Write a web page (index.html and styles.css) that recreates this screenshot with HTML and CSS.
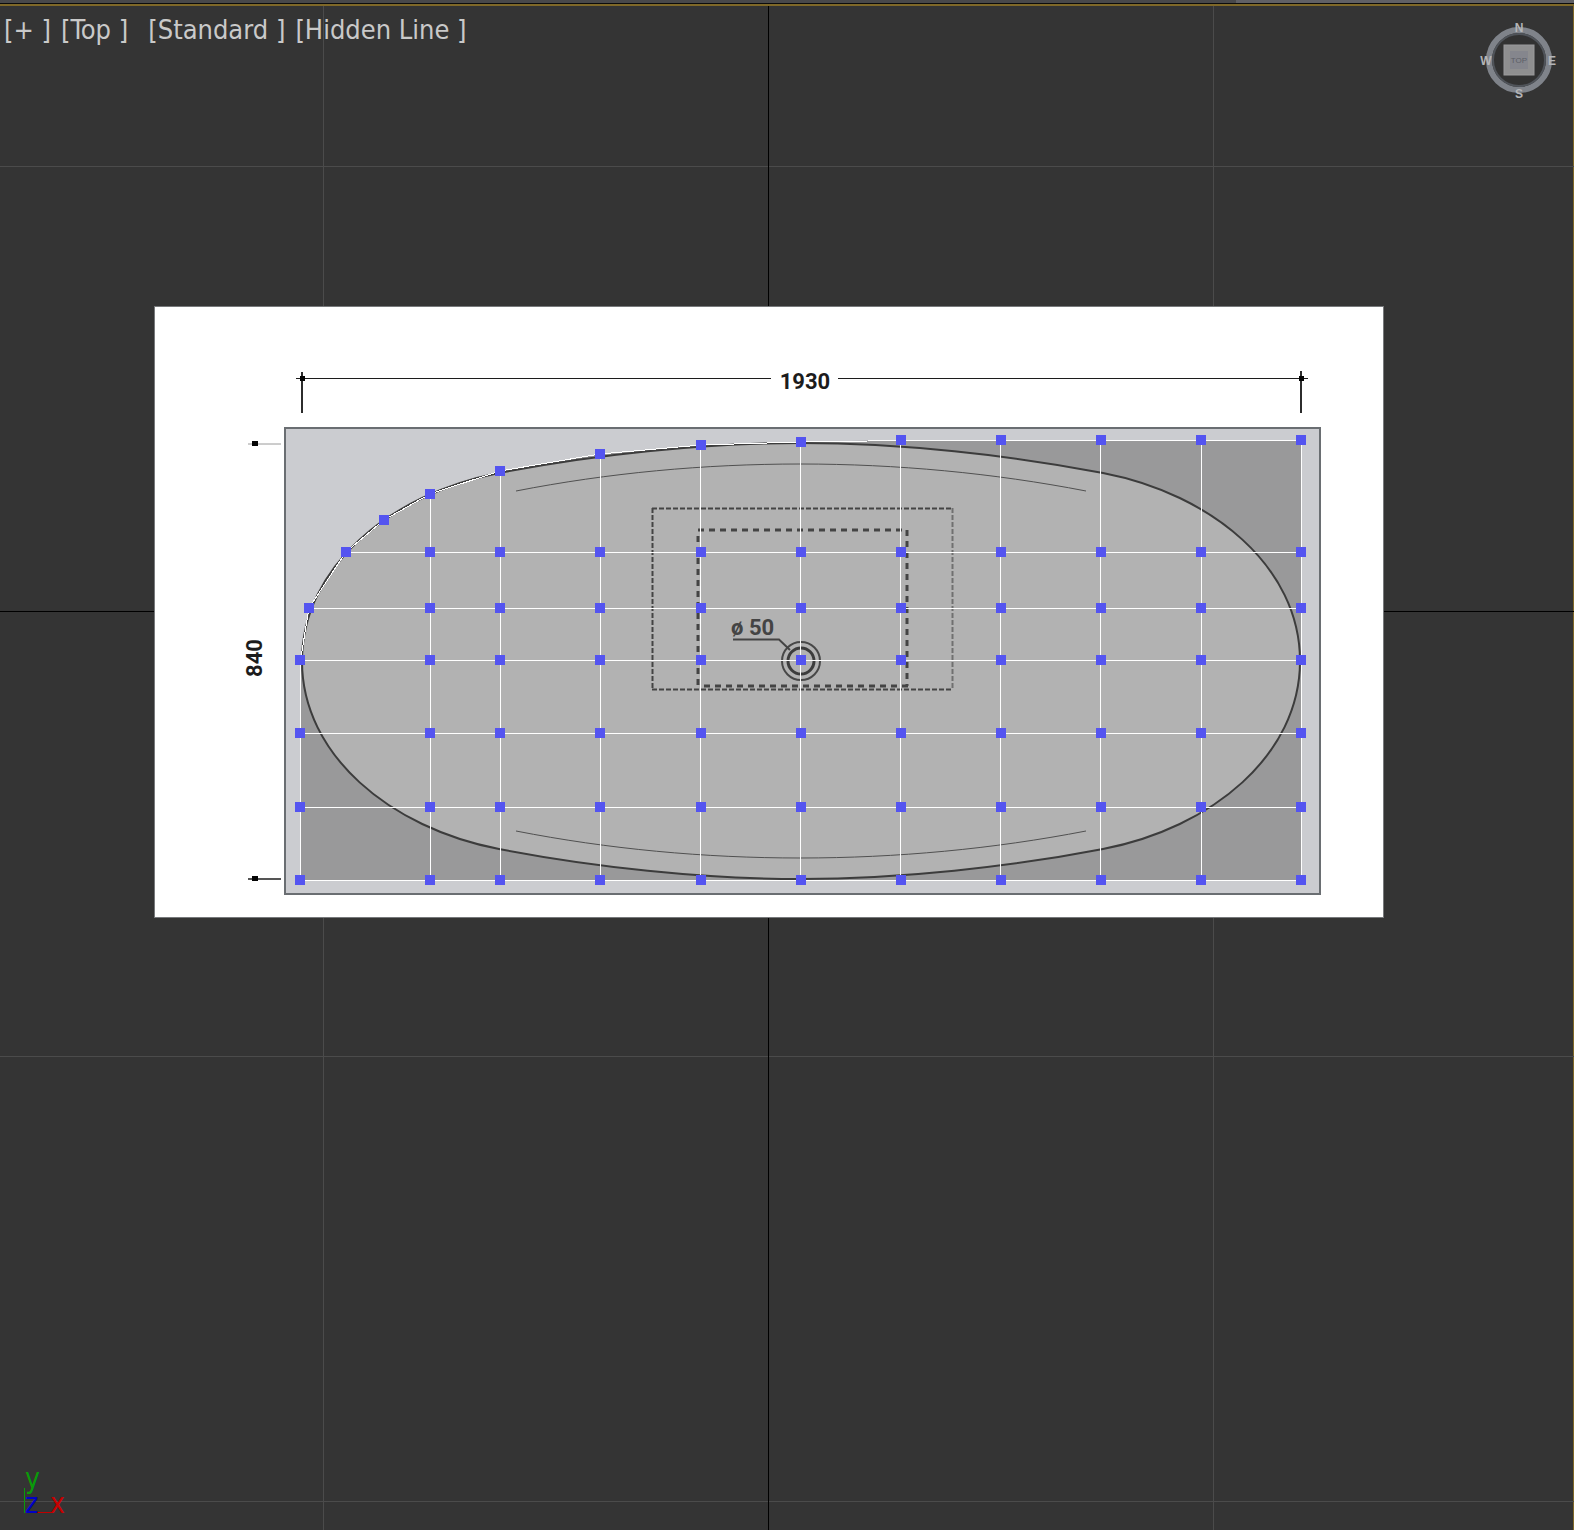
FILE: index.html
```html
<!DOCTYPE html>
<html lang="en">
<head>
<meta charset="utf-8">
<title>Top viewport</title>
<link rel="stylesheet" href="styles.css">
</head>
<body>
<div class="strip"><span class="strip-panel"></span></div>
<main class="viewport">
  <svg class="scene" viewBox="0 6 1574 1524" preserveAspectRatio="xMidYMid slice" role="img" aria-label="Bathtub plan with editable mesh">
    <defs>
      <path id="row" d="M425-5h10v10h-10zM495-5h10v10h-10zM595-5h10v10h-10zM696-5h10v10h-10zM796-5h10v10h-10zM896-5h10v10h-10zM996-5h10v10h-10zM1096-5h10v10h-10zM1196-5h10v10h-10zM1296-5h10v10h-10z"/>
      <path id="left" d="M295-5h10v10h-10z"/>
    </defs>
    <g class="grid">
      <path d="M323.500 6V1530M1213.500 6V1530M0 166.500H1574M0 1056.500H1574M0 1501.500H1574"/>
      <path class="grid-axis" d="M768.500 6V1530M0 611.500H1574"/>
    </g>

    <rect class="plane" x="154.500" y="306.500" width="1229" height="611"/>
    <rect class="sheet" x="285" y="428" width="1035" height="466"/>

    <path class="mesh-face" d="M300 880V660L309 608 346 552 384 520 430 494 500 471 600 454 701 445 801 442 901 440H1301V880Z"/>
    <path class="tub" d="M801 443C900 443 1010 455 1103 473C1212 494 1300 567 1300 661C1300 755 1212 828 1103 849C1010 867 900 879 801 879C702 879 592 867 499 849C390 828 302 755 302 661C302 567 390 494 499 473C592 455 702 443 801 443Z"/>
    <path class="fold" d="M516 491C700 455 900 455 1086 491M516 831C700 867 900 867 1086 831"/>

    <path class="dash-outer" d="M652 508.500H953M652 689.500H953M652.500 508V690"/>
    <path class="dash-outer faint" d="M952.500 508V690"/>
    <path class="dash-inner" d="M698 530H903M704 686H908M698 536V686M907 530V686"/>
    <circle class="drain-rim" cx="801" cy="661" r="19"/>
    <circle class="drain" cx="801" cy="661" r="13"/>
    <path class="leader" d="M733 639.500H779L790 650"/>
    <text class="dim dim-soft" x="731" y="635">ø 50</text>

    <path class="dim-line" d="M296 378.500H771M838 378.500H1308"/>
    <path class="dim-tick" d="M302 372V413M1301 371V413"/>
    <path class="dim-line pale" d="M248 444H281"/>
    <path class="dim-line low" d="M248 879H281"/>
    <path class="dim-dot" d="M300 376h5v5h-5zM1299 376h5v5h-5zM252 441h6v5h-6zM252 876h6v5h-6z"/>
    <text class="dim" x="805" y="389" text-anchor="middle">1930</text>
    <text class="dim" transform="translate(262 658) rotate(-90)" text-anchor="middle">840</text>

    <g class="mesh-line">
      <path d="M346 552.500H1301M309 608.500H1301M300 660.500H1301M300 733.500H1301M300 807.500H1301M300 880.500H1301"/>
      <path d="M300.500 660V880M430.500 494V880M500.500 471V880M600.500 454V880M700.500 445V880M800.500 442V880M900.500 440V880M1000.500 440V880M1100.500 440V880M1201.500 440V880M1301.500 440V880"/>
      <path d="M300.500 660L309 608 346 552 384 520 430 494 500 471 600 454 701 445 801 442 901 440.500H1301"/>
    </g>
    <g class="vertex">
      <use href="#row" y="552"/><use href="#row" y="608"/><use href="#row" y="660"/>
      <use href="#row" y="733"/><use href="#row" y="807"/><use href="#row" y="880"/>
      <use href="#left" y="660"/><use href="#left" y="733"/><use href="#left" y="807"/><use href="#left" y="880"/>
      <path d="M304 603h10v10h-10zM341 547h10v10h-10zM379 515h10v10h-10zM425 489h10v10h-10zM495 466h10v10h-10zM595 449h10v10h-10zM696 440h10v10h-10zM796 437h10v10h-10zM896 435h10v10h-10zM996 435h10v10h-10zM1096 435h10v10h-10zM1196 435h10v10h-10zM1296 435h10v10h-10z"/>
    </g>
  </svg>

  <header class="overlay">
    <nav class="labels" aria-label="Viewport menus">
      <button type="button">[+ ]</button>
      <button type="button">[Top ]</button>
      <button type="button" class="shading">[Standard ]</button>
      <button type="button">[Hidden Line ]</button>
    </nav>
    <svg class="cube" viewBox="0 0 80 80" role="img" aria-label="View cube, top">
      <circle class="cube-ring" cx="40" cy="40" r="30"/>
      <circle class="cube-shade" cx="40" cy="40" r="26"/>
      <rect class="cube-face" x="25" y="25" width="30" height="30"/>
      <rect class="cube-core" x="31" y="31" width="18" height="18"/>
      <text class="cube-top" x="40" y="43">TOP</text>
      <text class="compass" x="40" y="12">N</text>
      <text class="compass" x="40" y="78">S</text>
      <text class="compass" x="7" y="45">W</text>
      <text class="compass" x="73" y="45">E</text>
    </svg>
  </header>

  <svg class="tripod" viewBox="0 0 80 80" role="img" aria-label="World axes">
    <path class="axis-y" d="M24.500 38V63"/>
    <path class="axis-x" d="M36 62.500H52"/>
    <text class="name-y" x="25" y="38">y</text>
    <text class="name-z" x="25" y="63">z</text>
    <text class="name-x" x="50" y="63">x</text>
  </svg>
</main>
</body>
</html>
```
FILE: styles.css
```css
* { box-sizing: border-box; }

body {
  margin: 0;
  min-height: 100vh;
  display: flex;
  flex-direction: column;
  background: #343434;
  font-family: "DejaVu Sans Condensed", "Noto Sans", sans-serif;
}

.strip {
  display: flex;
  justify-content: flex-end;
  height: 4px;
  background: #48484a;
  border-bottom: 1px solid #0c0c0c;
}
.strip-panel { width: 338px; background: #606065; }

.viewport {
  position: relative;
  flex: 1;
  display: flex;
  flex-direction: column;
  justify-content: space-between;
  border-top: 2px solid #7f6828;
  box-shadow: inset -1px 0 #7f6828;
}

.scene {
  position: absolute;
  inset: 0;
  width: 100%;
  height: 100%;
}

.overlay {
  position: relative;
  display: flex;
  justify-content: space-between;
  align-items: flex-start;
  padding: 6px 15px 0 4px;
}
.labels { display: flex; gap: 10px; }
.labels button {
  margin: 0;
  padding: 0;
  border: 0;
  background: none;
  color: #c9c9c9;
  font: 27px/36px "DejaVu Sans Condensed", "Noto Sans", sans-serif;
  white-space: pre;
}
.labels .shading { margin-left: 10px; }

.grid { fill: none; stroke: #4b4b4b; shape-rendering: crispEdges; }
.grid-axis { stroke: #000; }

.plane { fill: #fff; stroke: #77797b; shape-rendering: crispEdges; }
.sheet { fill: #cbccd0; stroke: #6a6e72; stroke-width: 2; }
.mesh-face { fill: #99999a; }
.tub { fill: #b2b2b2; stroke: #3c3c3c; stroke-width: 2; }
.fold { fill: none; stroke: #505050; }

.dash-outer { fill: none; stroke: #444; stroke-width: 2; stroke-dasharray: 5 2; }
.faint { stroke: #707070; }
.dash-inner { fill: none; stroke: #444; stroke-width: 3; stroke-dasharray: 6 5; }
.drain-rim { fill: none; stroke: #484848; stroke-width: 2; }
.drain { fill: none; stroke: #3c3c3c; stroke-width: 3; }
.leader { fill: none; stroke: #444; stroke-width: 2; }

.dim { font: bold 22px Roboto, sans-serif; fill: #1c1c1c; }
.dim-soft { fill: #444; }
.dim-line { fill: none; stroke: #1c1c1c; }
.dim-tick { fill: none; stroke: #2c2c2c; stroke-width: 2; }
.pale { stroke: #9a9a9a; }
.low { stroke: #555; stroke-width: 2; }
.dim-dot { fill: #050505; }

.mesh-line { fill: none; stroke: #fff; shape-rendering: crispEdges; }
.vertex { fill: #5454f0; shape-rendering: crispEdges; }

.cube {
  width: 80px;
  height: 80px;
  margin-top: 8px;
  font-family: "Liberation Sans", sans-serif;
  text-anchor: middle;
}
.cube-ring { fill: #323232; stroke: #7f838a; stroke-width: 6; }
.cube-shade { fill: none; stroke: #50545a; stroke-width: 2; }
.cube-face { fill: #8f8f90; stroke: #9a9a9b; }
.cube-core { fill: #85868d; }
.cube-top { font-size: 8px; fill: #5c5e66; }
.compass { font-size: 12px; font-weight: bold; fill: #b4b5b7; }

.tripod { position: relative; width: 80px; height: 80px; font-size: 28px; }
.axis-y { stroke: #0a9a0a; }
.axis-x { stroke: #c00000; }
.name-y { fill: #0a9a0a; }
.name-z { fill: #0000c8; }
.name-x { fill: #c80000; }
```
